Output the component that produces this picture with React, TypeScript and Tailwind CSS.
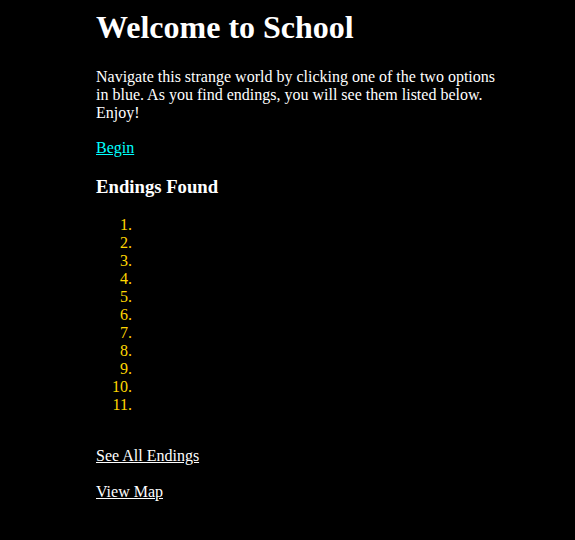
import React from "react";

const endings = Array.from({ length: 11 }, (_, i) => i + 1);

export default function App() {
  return (
    <div className="min-h-[540px] bg-black text-white font-['Liberation_Serif','Times_New_Roman',serif] text-base">
      <div className="ml-[96px] w-[404px] pt-[9px]">
        <h1 className="text-[32px] font-bold leading-[37px]">Welcome to School</h1>
        <p className="mt-[22px] leading-[18px]">
          Navigate this strange world by clicking one of the two options in blue. As you find
          endings, you will see them listed below. Enjoy!
        </p>
        <p className="mt-[17px] leading-[18px]">
          <a href="#" className="text-[#00ffff] underline">
            Begin
          </a>
        </p>
        <h3 className="mt-[19px] text-[18.72px] font-bold leading-[21px]">Endings Found</h3>
        <ol className="mt-[19px] list-decimal pl-10 text-[#ffd700] leading-[18px]">
          {endings.map((n) => (
            <li key={n}>{"\u00a0"}</li>
          ))}
        </ol>
        <p className="mt-[33px] leading-[18px]">
          <a href="#" className="text-white underline">
            See All Endings
          </a>
        </p>
        <p className="mt-[18px] leading-[18px]">
          <a href="#" className="text-white underline">
            View Map
          </a>
        </p>
      </div>
    </div>
  );
}
